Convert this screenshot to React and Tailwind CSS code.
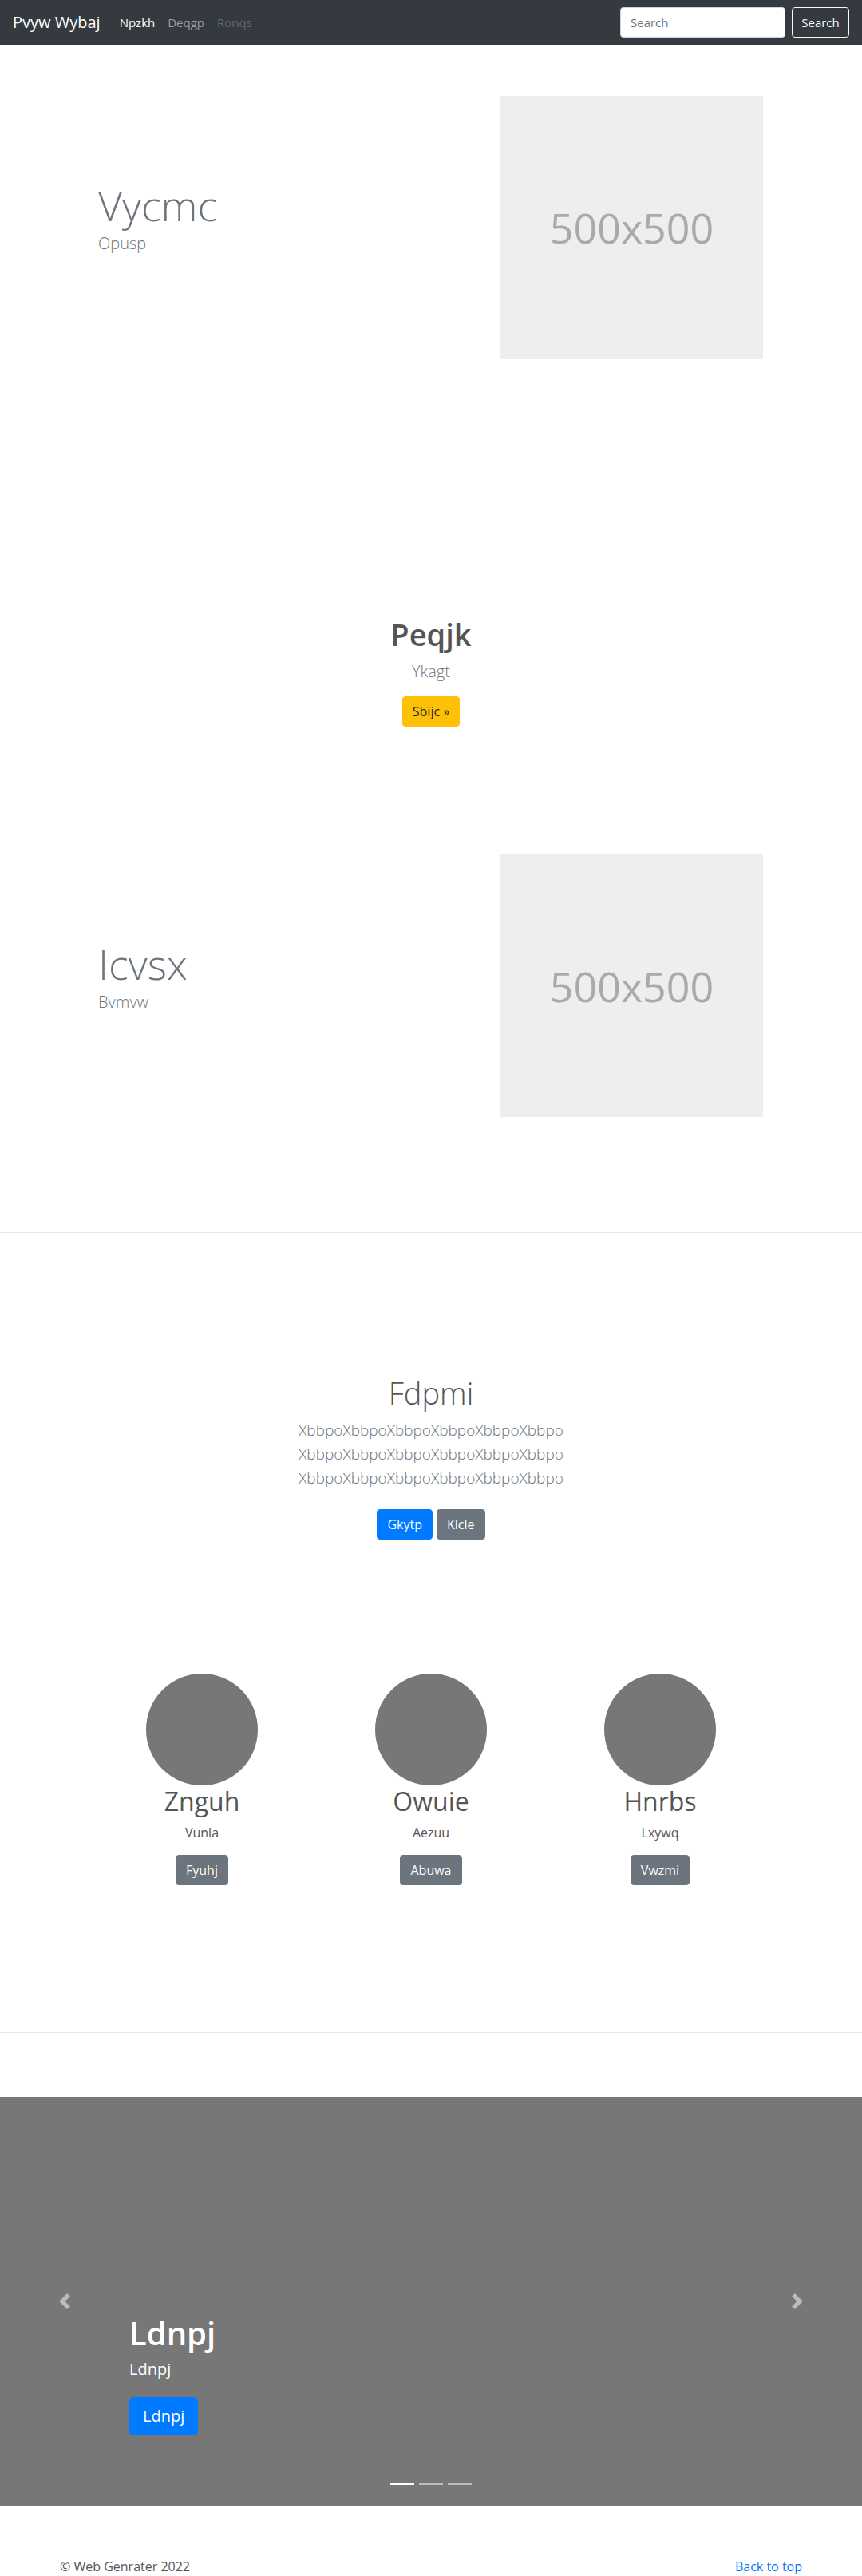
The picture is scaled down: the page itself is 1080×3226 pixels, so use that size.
import React from "react";

function Placeholder() {
  return (
    <div className="w-[329px] h-[329px] bg-[#eeeeee] flex items-center justify-center text-[52px] leading-none text-[#aaaaaa]">
      500x500
    </div>
  );
}

function Feature({ title, sub }) {
  return (
    <section className="pt-16 pb-16">
      <div className="mx-auto w-[960px] px-[15px] flex items-start">
        <div className="w-1/2 pl-12 pt-[106px]">
          <h1 className="text-[52px] leading-[1.2] font-light text-[#6c757d] mb-[2px]">{title}</h1>
          <p className="text-[20px] leading-[1.5] font-light text-[#6c757d]">{sub}</p>
        </div>
        <div className="w-1/2 pl-[87px]">
          <Placeholder />
        </div>
      </div>
    </section>
  );
}

function Divider() {
  return <hr className="my-20 h-0 border-0 border-t border-[#e5e5e5]" />;
}

function Member({ name, role, btn }) {
  return (
    <div className="flex flex-col items-center text-center">
      <div className="w-[140px] h-[140px] rounded-full bg-[#777777]" />
      <h2 className="text-[32px] leading-[1.2] font-normal text-[#555555] mt-px mb-2">{name}</h2>
      <p className="text-[16px] leading-6 text-[#555555] mb-4">{role}</p>
      <button className="bg-[#6c757d] text-white text-[16px] leading-6 px-3 py-[6px] rounded border border-[#6c757d]">
        {btn}
      </button>
    </div>
  );
}

export default function App() {
  return (
    <div className="font-['Open_Sans',sans-serif] text-[#212529] bg-white">
      {/* Navbar */}
      <nav className="h-14 bg-[#343a40] flex items-center px-4">
        <span className="text-white text-[20px] leading-[30px] mr-4">Pvyw Wybaj</span>
        <ul className="flex items-center text-[15px] leading-6">
          <li className="px-2 text-white">Npzkh</li>
          <li className="px-2 text-white/50">Deqgp</li>
          <li className="px-2 text-white/25">Ronqs</li>
        </ul>
        <form className="ml-auto flex items-center gap-2">
          <input
            type="text"
            placeholder="Search"
            className="w-[207px] h-[38px] bg-white rounded border border-[#ced4da] px-3 text-[15px] text-[#495057] placeholder:text-[#6c757d] outline-none"
          />
          <button
            type="button"
            className="h-[38px] w-[72px] rounded border border-[#f8f9fa] text-[#f8f9fa] text-[15px] leading-6"
          >
            Search
          </button>
        </form>
      </nav>

      <Feature title="Vycmc" sub="Opusp" />
      <Divider />

      {/* Centered call to action */}
      <section className="py-24 text-center">
        <h1 className="text-[38px] leading-[48px] font-semibold text-[#555555] mb-2">Peqjk</h1>
        <p className="text-[20px] leading-[1.5] font-light text-[#6c757d] mb-4">Ykagt</p>
        <button className="bg-[#ffc107] border border-[#ffc107] text-[#212529] text-[16px] leading-6 px-3 py-[6px] rounded">
          Sbijc »
        </button>
      </section>

      <Feature title="Icvsx" sub="Bvmvw" />
      <Divider />

      {/* Jumbotron */}
      <section className="py-24 text-center">
        <h1 className="text-[38px] leading-[48px] font-light text-[#555555] mb-2">Fdpmi</h1>
        <div className="text-[19px] leading-[30px] font-light text-[#6c757d] pb-4">
          <p>XbbpoXbbpoXbbpoXbbpoXbbpoXbbpo</p>
          <p>XbbpoXbbpoXbbpoXbbpoXbbpoXbbpo</p>
          <p>XbbpoXbbpoXbbpoXbbpoXbbpoXbbpo</p>
        </div>
        <div className="flex justify-center gap-[5px] py-2">
          <button className="bg-[#007bff] border border-[#007bff] text-white text-[16px] leading-6 px-3 py-[6px] rounded">
            Gkytp
          </button>
          <button className="bg-[#6c757d] border border-[#6c757d] text-white text-[16px] leading-6 px-3 py-[6px] rounded">
            Klcle
          </button>
        </div>
      </section>

      {/* Team */}
      <section className="pt-16 pb-[104px]">
        <div className="mx-auto w-[861px] grid grid-cols-3">
          <Member name="Znguh" role="Vunla" btn="Fyuhj" />
          <Member name="Owuie" role="Aezuu" btn="Abuwa" />
          <Member name="Hnrbs" role="Lxywq" btn="Vwzmi" />
        </div>
      </section>

      <Divider />

      {/* Carousel */}
      <section className="relative h-[512px] bg-[#777777] mb-16 overflow-hidden">
        <div className="absolute left-0 top-0 bottom-0 w-[15%] flex items-center justify-center opacity-50">
          <svg width="20" height="20" viewBox="0 0 8 8" fill="#ffffff">
            <path d="M5.25 0l-4 4 4 4 1.5-1.5L4.25 4l2.5-2.5L5.25 0z" />
          </svg>
        </div>
        <div className="absolute right-0 top-0 bottom-0 w-[15%] flex items-center justify-center opacity-50">
          <svg width="20" height="20" viewBox="0 0 8 8" fill="#ffffff">
            <path d="M2.75 0l-1.5 1.5L3.75 4l-2.5 2.5L2.75 8l4-4-4-4z" />
          </svg>
        </div>
        <div className="absolute left-[15%] right-[15%] bottom-[88px] text-left text-white flex flex-col items-start">
          <h1 className="text-[40px] leading-[1.2] font-semibold mb-[6px]">Ldnpj</h1>
          <p className="text-[20px] leading-[1.5] mb-[20px]">Ldnpj</p>
          <button className="bg-[#007bff] border border-[#007bff] text-white text-[20px] leading-[1.5] px-4 py-2 rounded-[5px]">
            Ldnpj
          </button>
        </div>
        <div className="absolute left-0 right-0 bottom-[26px] flex justify-center gap-[6px]">
          <span className="block w-[30px] h-[3px] bg-white" />
          <span className="block w-[30px] h-[3px] bg-white/50" />
          <span className="block w-[30px] h-[3px] bg-white/50" />
        </div>
      </section>

      {/* Footer */}
      <footer className="mx-auto w-[960px] px-[15px] flex justify-between text-[16px] leading-6">
        <p className="text-[#555555]">© Web Genrater 2022</p>
        <a href="#" className="text-[#007bff]">Back to top</a>
      </footer>
    </div>
  );
}
